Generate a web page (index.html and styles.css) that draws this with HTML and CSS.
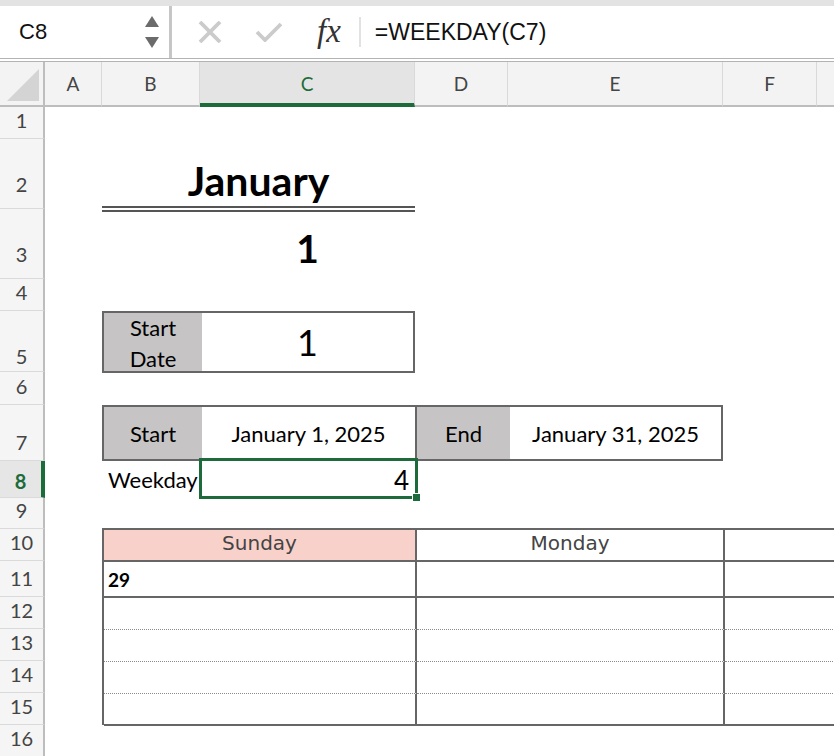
FILE: index.html
```html
<!DOCTYPE html>
<html lang="en">

<head>
    <meta charset="UTF-8">
    <meta name="viewport" content="width=device-width, initial-scale=1.0">
    <title>Calendar sheet</title>
    <link rel="stylesheet" href="styles.css">
</head>

<body>
    <div class="topband"></div>

    <!-- name box + formula bar -->
    <div class="formula_bar">
        <div class="namebox">
            <span class="ref">C8</span>
            <span class="spin">
                <svg width="14" height="11" viewBox="0 0 14 11"><path d="M7 0 L14 11 L0 11 Z" fill="#6b6b6b"/></svg>
                <svg width="14" height="11" viewBox="0 0 14 11"><path d="M0 0 L14 0 L7 11 Z" fill="#6b6b6b"/></svg>
            </span>
        </div>
        <div class="fbar">
            <svg class="ico_x" width="26" height="22" viewBox="0 0 26 22"><path d="M3 1 L23 21 M23 1 L3 21" stroke="#cbcbcb" stroke-width="3.8" fill="none"/></svg>
            <svg class="ico_ok" width="28" height="20" viewBox="0 0 28 20"><path d="M2 10 L10 18 L26 2" stroke="#cbcbcb" stroke-width="3.8" fill="none"/></svg>
            <span class="fx">fx</span>
            <span class="fdiv"></span>
            <span class="formula">=WEEKDAY(C7)</span>
        </div>
    </div>

    <div class="sheet">
        <!-- column headers -->
        <div class="corner"><span class="tri"></span></div>
        <div class="ch">A</div>
        <div class="ch">B</div>
        <div class="ch ch_sel">C</div>
        <div class="ch">D</div>
        <div class="ch">E</div>
        <div class="ch">F</div>
        <div class="ch"></div>

        <!-- row headers -->
        <div class="rh">1</div>
        <div class="rh rh_tall">2</div>
        <div class="rh rh_tall">3</div>
        <div class="rh">4</div>
        <div class="rh rh_low">5</div>
        <div class="rh">6</div>
        <div class="rh">7</div>
        <div class="rh rh_sel">8</div>
        <div class="rh">9</div>
        <div class="rh">10</div>
        <div class="rh">11</div>
        <div class="rh">12</div>
        <div class="rh">13</div>
        <div class="rh">14</div>
        <div class="rh">15</div>
        <div class="rh">16</div>

        <!-- cells -->
        <div class="month">January</div>
        <div class="monthnum">1</div>

        <div class="startbox">
            <div class="lbl lbl_two"><span>Start</span><span>Date</span></div>
            <div class="startval">1</div>
        </div>

        <div class="rangebox">
            <div class="lbl lbl_b">Start</div>
            <div class="rval rval_c">January 1, 2025</div>
            <div class="lbl lbl_d">End</div>
            <div class="rval rval_e">January 31, 2025</div>
        </div>

        <div class="weekday_lbl">Weekday</div>
        <div class="selected">4<span class="handle"></span></div>

        <div class="cal">
            <div class="day day_sun">Sunday</div>
            <div class="day">Monday</div>
            <div class="day"></div>

            <div class="date">29</div>
            <div class="date"></div>
            <div class="date"></div>

            <div class="line"></div><div class="line"></div><div class="line"></div>
            <div class="line"></div><div class="line"></div><div class="line"></div>
            <div class="line"></div><div class="line"></div><div class="line"></div>
            <div class="line line_end"></div><div class="line line_end"></div><div class="line line_end"></div>
        </div>
    </div>
</body>

</html>
```

FILE: styles.css
```css
* {
    margin: 0;
    padding: 0;
    box-sizing: border-box;
}

body {
    width: 834px;
    height: 756px;
    overflow: hidden;
    background: #fff;
    font-family: "Lato", "Liberation Sans", sans-serif;
    color: #000;
}

.topband {
    height: 6px;
    background: #e3e3e3;
}

/* formula bar */
.formula_bar {
    display: flex;
    height: 56px;
    border-bottom: 4px double #b3b3b3;
}

.namebox {
    width: 172px;
    display: flex;
    align-items: center;
    justify-content: space-between;
    padding: 0 10px 0 19px;
    border-right: 3px solid #c6c6c6;
}

.ref {
    font-family: "Liberation Sans", sans-serif;
    font-size: 22px;
    color: #111;
}

.spin {
    display: flex;
    flex-direction: column;
    gap: 10px;
}

.fbar {
    flex: 1;
    display: flex;
    align-items: center;
}

.ico_x {
    margin-left: 25px;
}

.ico_ok {
    margin-left: 32px;
}

.fx {
    margin-left: 34px;
    font-family: "Liberation Serif", serif;
    font-style: italic;
    font-size: 33px;
    color: #333;
    padding-bottom: 2px;
}

.fdiv {
    width: 2px;
    height: 30px;
    background: #e2e2e2;
    margin-left: 18px;
}

.formula {
    margin-left: 14px;
    font-family: "Liberation Sans", sans-serif;
    font-size: 23px;
    color: #111;
}

/* sheet grid */
.sheet {
    display: grid;
    grid-template-columns: 45px 57px 98px 215px 93px 215px 94px 120px;
    grid-template-rows: 45px 32px 70px 70px 32px 61px 33px 56px 37px 31px 32px 36px 32px 32px 32px 32px 32px;
    width: 937px;
}

.corner {
    grid-row: 1;
    grid-column: 1;
    background: #f3f3f3;
    border-right: 2px solid #bdbdbd;
    border-bottom: 2px solid #bdbdbd;
    position: relative;
}

.tri {
    position: absolute;
    right: 4px;
    bottom: 4px;
    width: 0;
    height: 0;
    border-left: 32px solid transparent;
    border-bottom: 32px solid #d4d4d4;
}

.ch {
    grid-row: 1;
    background: #f3f3f3;
    border-bottom: 2px solid #bdbdbd;
    border-right: 1px solid #d9d9d9;
    display: flex;
    align-items: center;
    justify-content: center;
    font-size: 19px;
    color: #444;
}

.ch_sel {
    background: #e4e4e4;
    color: #1d6b3b;
    border-bottom: 4px solid #1d6b3b;
    padding-top: 2px;
}

.rh {
    grid-column: 1;
    background: #f5f5f5;
    border-right: 2px solid #bdbdbd;
    border-bottom: 1px solid #dadada;
    display: flex;
    align-items: flex-end;
    justify-content: center;
    padding-bottom: 6px;
    font-size: 20px;
    color: #444;
}

.rh_tall {
    padding-bottom: 12px;
}

.rh_low {
    padding-bottom: 3px;
}

.rh_sel {
    background: #e6e6e6;
    color: #1d6b3b;
    font-weight: bold;
    border-right: 4px solid #1d6b3b;
    padding-bottom: 4px;
}

/* cells */
.month {
    grid-column: 3 / 5;
    grid-row: 3;
    display: flex;
    align-items: center;
    justify-content: center;
    padding-top: 16px;
    font-size: 41px;
    font-weight: bold;
    border-bottom: 6px double #555;
    margin-bottom: -3px;
}

.monthnum {
    grid-column: 4;
    grid-row: 4;
    display: flex;
    align-items: flex-end;
    justify-content: center;
    padding-bottom: 8px;
    font-size: 39px;
    font-weight: bold;
}

.startbox {
    grid-column: 3 / 5;
    grid-row: 6;
    display: flex;
    border: 2px solid #666;
    margin-bottom: -1px;
}

.lbl {
    background: #c6c4c5;
    display: flex;
    align-items: center;
    justify-content: center;
    font-size: 22px;
}

.lbl_two {
    width: 98px;
    flex-direction: column;
    line-height: 31px;
    padding-top: 1px;
}

.startval {
    flex: 1;
    display: flex;
    align-items: center;
    justify-content: center;
    font-size: 36px;
}

.rangebox {
    grid-column: 3 / 7;
    grid-row: 8;
    display: flex;
    border: 2px solid #666;
}

.lbl_b {
    width: 98px;
}

.lbl_d {
    width: 95px;
    border-left: 2px solid #666;
}

.rval {
    display: flex;
    align-items: center;
    justify-content: center;
    font-size: 22px;
}

.rval_c {
    width: 213px;
}

.rval_e {
    flex: 1;
}

.weekday_lbl {
    grid-column: 3;
    grid-row: 9;
    display: flex;
    align-items: center;
    padding-left: 6px;
    font-size: 22px;
}

.selected {
    grid-column: 4;
    grid-row: 9;
    margin: -3px -3px -1px -1px;
    border: 3px solid #1d6b3b;
    position: relative;
    z-index: 2;
    display: flex;
    align-items: center;
    justify-content: flex-end;
    padding: 2px 6px 0 0;
    font-size: 26px;
}

.handle {
    position: absolute;
    right: -6px;
    bottom: -6px;
    width: 9px;
    height: 9px;
    background: #1d6b3b;
    border: 1px solid #fff;
}

/* calendar */
.cal {
    grid-column: 3 / 9;
    grid-row: 11 / 17;
    display: grid;
    grid-template-columns: 313px 308px 1fr;
    grid-template-rows: 32px 36px 32px 32px 32px 32px;
    border-left: 2px solid #666;
    border-top: 2px solid #666;
    margin-top: -1px;
}

.cal > div {
    border-right: 2px solid #666;
}

.day {
    border-bottom: 2px solid #666;
    display: flex;
    align-items: center;
    justify-content: center;
    padding-bottom: 4px;
    font-family: "DejaVu Sans", sans-serif;
    font-size: 20px;
    color: #444;
}

.day_sun {
    background: #f9d1cb;
}

.date {
    border-bottom: 2px solid #666;
    display: flex;
    align-items: center;
    padding-left: 4px;
    font-size: 19px;
    font-weight: bold;
}

.line {
    border-bottom: 1px dotted #8a8a8a;
}

.line_end {
    border-bottom: 2px solid #666;
}
```
